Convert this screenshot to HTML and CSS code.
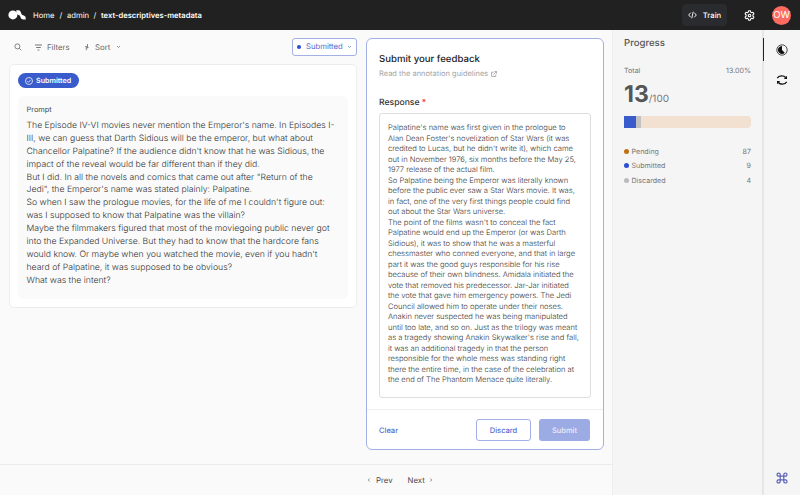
FILE: index.html
```html
<!DOCTYPE html>
<html lang="en">
<head>
<meta charset="utf-8">
<title>text-descriptives-metadata</title>
<link rel="stylesheet" href="styles.css">
</head>
<body>
<header class="topbar">
  <svg class="logo" width="18" height="10" viewBox="0 0 18 10" fill="#fff"><circle cx="4.900" cy="4.900" r="4.500"/><path d="M8.300.3h1.900c1.300 0 2.100.6 2.600 1.900l.5 1.300c.4 1 .9 1.500 1.900 1.800 1.500.4 2.500 1.200 2.500 2.700v1.500h-2.200c-1.600 0-2.500-.7-2.900-2l-.3-.9c-.3-.8-.8-1.300-1.700-1.600C9 4.500 8.300 3.700 8.300 2.300z"/></svg>
  <nav class="crumbs"><span class="c-home">Home</span><span class="sep">/</span><span class="c-admin">admin</span><span class="sep">/</span><b>text-descriptives-metadata</b></nav>
  <button class="train"><svg width="9" height="8" viewBox="0 0 9 8" fill="none" stroke="#fff" stroke-width=".9"><path d="M2.700 1.700.7 4l2 2.300M6.300 1.700l2 2.300-2 2.300M5.200.7 3.800 7.300"/></svg><span>Train</span></button>
  <svg class="gear" width="11" height="11" viewBox="0 0 11 11" fill="none" stroke="#fff" stroke-width="1.100" stroke-linejoin="round"><path d="M4.600.8h1.800l.3 1.300 1 .6 1.300-.4.9 1.500-1 1v1.400l1 1-.9 1.500-1.300-.4-1 .6-.3 1.300H4.600l-.3-1.300-1-.6-1.300.4-.9-1.500 1-1V4.800l-1-1L2 2.300l1.300.4 1-.6z"/><circle cx="5.500" cy="5.500" r="1.300"/></svg>
  <div class="avatar">OW</div>
</header>
<div class="body">
  <main class="main">
    <div class="columns">
      <section class="left">
        <div class="toolbar">
          <svg width="8" height="8" viewBox="0 0 8 8" fill="none" stroke="#666" stroke-width=".8"><circle cx="3.400" cy="3.400" r="2.500"/><path d="m5.300 5.300 2 2"/></svg>
          <svg class="i-filter" width="7" height="7" viewBox="0 0 7 7" stroke="#666" stroke-width=".9"><path d="M0 1h7M1.200 3.500h4.600M2.600 6h1.800"/></svg><span class="t-filter">Filters</span>
          <svg class="i-sort" width="6" height="8" viewBox="0 0 6 8" fill="none" stroke="#666" stroke-width=".8"><path d="M2.300 7.200V3L1.300 4M3.500 1v4.200l1-1"/></svg><span class="t-sort">Sort</span>
          <svg class="i-chev" width="5" height="4" viewBox="0 0 5 4" fill="none" stroke="#777" stroke-width=".8"><path d="m1 1 1.500 1.500L4 1"/></svg>
          <div class="status"><i></i><span>Submitted</span><svg width="5" height="4" viewBox="0 0 5 4" fill="none" stroke="#6b7fd6" stroke-width=".8"><path d="m1 1 1.500 1.500L4 1"/></svg></div>
        </div>
        <article class="record">
          <div class="badge"><svg width="8" height="8" viewBox="0 0 8 8" fill="none" stroke="#fff" stroke-width=".75"><circle cx="4" cy="4" r="3.500"/><path d="m2.300 4.100 1.200 1.200 2.200-2.400"/></svg><span>Submitted</span></div>
          <div class="field">
            <h3>Prompt</h3>
            <p>The Episode IV-VI movies never mention the Emperor's name. In Episodes I-
III, we can guess that Darth Sidious will be the emperor, but what about
Chancellor Palpatine? If the audience didn't know that he was Sidious, the
impact of the reveal would be far different than if they did.
But I did. In all the novels and comics that came out after "Return of the
Jedi", the Emperor's name was stated plainly: Palpatine.
So when I saw the prologue movies, for the life of me I couldn't figure out:
was I supposed to know that Palpatine was the villain?
Maybe the filmmakers figured that most of the moviegoing public never got
into the Expanded Universe. But they had to know that the hardcore fans
would know. Or maybe when you watched the movie, even if you hadn't
heard of Palpatine, it was supposed to be obvious?
What was the intent?</p>
          </div>
        </article>
      </section>
      <section class="form">
        <div class="questions">
          <h2>Submit your feedback</h2>
          <div class="guide"><span>Read the annotation guidelines</span><svg width="6" height="6" viewBox="0 0 6 6" fill="none" stroke="#999" stroke-width=".8"><path d="M2.500 1.200H.6v4.200h4.200V3.500M3.500.5h2v2M5.400.6 2.600 3.400"/></svg></div>
          <h4>Response <em>*</em></h4>
          <div class="answer">Palpatine's name was first given in the prologue to
Alan Dean Foster's novelization of Star Wars (it was
credited to Lucas, but he didn't write it), which came
out in November 1976, six months before the May 25,
1977 release of the actual film.
So Palpatine being the Emperor was literally known
before the public ever saw a Star Wars movie. It was,
in fact, one of the very first things people could find
out about the Star Wars universe.
The point of the films wasn't to conceal the fact
Palpatine would end up the Emperor (or was Darth
Sidious), it was to show that he was a masterful
chessmaster who conned everyone, and that in large
part it was the good guys responsible for his rise
because of their own blindness. Amidala initiated the
vote that removed his predecessor. Jar-Jar initiated
the vote that gave him emergency powers. The Jedi
Council allowed him to operate under their noses.
Anakin never suspected he was being manipulated
until too late, and so on. Just as the trilogy was meant
as a tragedy showing Anakin Skywalker's rise and fall,
it was an additional tragedy in that the person
responsible for the whole mess was standing right
there the entire time, in the case of the celebration at
the end of The Phantom Menace quite literally.</div>
        </div>
        <div class="actions"><button class="clear">Clear</button><button class="discard">Discard</button><button class="submit">Submit</button></div>
      </section>
    </div>
    <footer class="pager">
      <svg width="4" height="6" viewBox="0 0 4 6" fill="none" stroke="#777" stroke-width=".8"><path d="M2.700 1.500 1.200 3l1.500 1.500"/></svg><span class="prev">Prev</span><span class="next">Next</span><svg width="4" height="6" viewBox="0 0 4 6" fill="none" stroke="#777" stroke-width=".8"><path d="M1.300 1.500 2.800 3 1.300 4.500"/></svg>
    </footer>
  </main>
  <aside class="progress">
    <h2>Progress</h2>
    <div class="row total"><span>Total</span><span>13.00%</span></div>
    <div class="count"><b>13</b><span>/100</span></div>
    <div class="bar"><i class="done"></i><i class="gone"></i></div>
    <div class="row"><i class="dot pending"></i><span>Pending</span><span class="num">87</span></div>
    <div class="row"><i class="dot submitted"></i><span>Submitted</span><span class="num">9</span></div>
    <div class="row"><i class="dot discarded"></i><span>Discarded</span><span class="num">4</span></div>
  </aside>
  <div class="rail">
    <div class="tab"><svg width="12" height="12" viewBox="0 0 12 12"><circle cx="6" cy="6" r="5.200" fill="none" stroke="#222" stroke-width=".8"/><path d="M6 2v4l2.800 2.800A4 4 0 1 1 6 2z" fill="#111"/></svg></div>
    <svg class="refresh" width="12" height="12" viewBox="0 0 12 12" fill="none" stroke="#111" stroke-width="1.300"><path d="M1.300 4.100C3 1.300 7.500 1.100 9.700 3.500M10.700 7.900C9 10.700 4.500 10.900 2.300 8.500"/><path d="M11 1.700v3.200H7.800zM1 10.300V7.100h3.200z" fill="#111" stroke="none"/></svg>
    <svg class="cmd" width="12" height="12" viewBox="0 0 12 12" fill="none" stroke="#5a62b8" stroke-width="1.200"><path d="M4.200 4.200h3.600v3.600H4.200zM4.200 4.200H2.600a1.600 1.600 0 1 1 1.600-1.600zM7.800 4.200V2.600a1.600 1.600 0 1 1 1.600 1.600zM7.800 7.800h1.600a1.600 1.600 0 1 1-1.600 1.600zM4.200 7.800v1.600a1.600 1.600 0 1 1-1.600-1.600z"/></svg>
  </div>
</div>
</body>
</html>
```
FILE: styles.css
```css
* { box-sizing: border-box; }
body { margin: 0; width: 800px; height: 495px; overflow: hidden; font-family: Inter, "Liberation Sans", sans-serif; font-size: 8px; color: #4a4a4a; background: #fafafa; display: flex; flex-direction: column; text-rendering: geometricPrecision; }
h2, h3, h4, p { margin: 0; font-weight: 400; }
button { font: inherit; margin: 0; padding: 0; border: 0; background: none; text-rendering: inherit; }
svg { display: block; flex: none; }
span { white-space: nowrap; }

.topbar { height: 30px; flex: none; background: #212121; color: #fff; display: flex; align-items: center; padding: 0 9px 0 8px; }
.logo { margin-right: 7px; }
.crumbs { display: flex; font-size: 7.700px; line-height: 12px; padding-top: 1px; }
.crumbs .c-home { width: 22px; }
.crumbs .c-admin { width: 22px; }
.crumbs .sep { width: 12px; text-align: center; }
.crumbs b { font-weight: 600; font-size: 7.600px; }
.train { margin-left: auto; width: 45px; height: 22px; border-radius: 4px; background: #292b2e; color: #fff; display: flex; align-items: center; justify-content: center; gap: 6px; font-size: 7.700px; font-weight: 500; }
.gear { margin: 0 17px 0 17px; }
.avatar { width: 19px; height: 19px; border-radius: 50%; background: #fc6a60; font-size: 9.500px; line-height: 19px; text-align: center; }

.body { flex: 1; display: flex; min-height: 0; }
.main { width: 612px; display: flex; flex-direction: column; }
.columns { flex: 1; display: flex; gap: 9px; padding: 8px 8px 14px 9px; }
.left { width: 348px; }
.toolbar { display: flex; align-items: center; height: 18px; margin-bottom: 8px; padding-left: 5px; font-size: 7.800px; line-height: 10px; color: #666; }
.i-filter { margin: 0 5px 0 13px; }
.t-filter { width: 37px; }
.i-sort { margin: 0 5px 0 0; }
.t-sort { width: 21px; }
.status { margin-left: auto; width: 65px; height: 18px; border: 1px solid #a3b0e6; border-radius: 3px; background: #fff; color: #5468cc; display: flex; align-items: center; padding: 0 4px; font-size: 7.700px; }
.status i { width: 4px; height: 4px; border-radius: 50%; background: #2a4fd0; margin-right: 5px; }
.status svg { margin-left: auto; }
.record { height: 244px; border: 1px solid #ededed; border-radius: 5px; background: #fff; padding: 8px; }
.badge { width: 61px; height: 15px; border-radius: 8px; background: #3a5bcb; color: #fff; display: flex; align-items: center; gap: 3px; padding-left: 7px; font-size: 7.150px; font-weight: 600; }
.field { margin-top: 8px; height: 203px; border-radius: 5px; background: #fafafa; padding: 8px 8.500px; }
.field h3 { font-size: 7.400px; line-height: 12px; margin-bottom: 4px; }
.field p { font-size: 8.700px; font-weight: 300; line-height: 12.870px; white-space: pre; color: #333; }

.form { width: 238px; border: 1px solid #a3b0e6; border-radius: 6px; background: #fff; display: flex; flex-direction: column; }
.questions { flex: 1; padding: 14px 12px 0; }
.form h2 { font-size: 9.600px; line-height: 14px; color: #222; font-weight: 500; }
.guide { display: flex; align-items: center; gap: 3px; font-size: 7.500px; line-height: 14px; color: #a5a5a5; }
.form h4 { font-size: 8.600px; line-height: 14px; margin-top: 15px; color: #333; font-weight: 500; }
.form em { color: #f33; font-style: normal; }
.answer { margin-top: 3px; width: 212px; height: 285px; border: 1px solid #ddd; border-radius: 3px; padding: 9px 8px 0; font-size: 7.600px; font-weight: 300; line-height: 10.500px; white-space: pre; color: #333; }
.actions { height: 40px; border-top: 1px solid #eee; display: flex; align-items: center; padding: 0 13px 0 12px; font-size: 7.500px; font-weight: 500; color: #5468cc; }
.actions button { color: inherit; padding-top: 1px; }
.actions .discard { margin-left: auto; width: 55px; height: 22px; border: 1px solid #a3b0e6; border-radius: 3px; }
.actions .submit { margin-left: 8px; width: 51px; height: 22px; border-radius: 3px; background: #9dabe4; color: #e9edfb; }

.pager { height: 31px; flex: none; border-top: 1px solid #ebebeb; display: flex; align-items: center; padding-left: 367px; font-size: 7.800px; }
.prev { margin: 0 15px 0 5px; }
.next { margin-right: 4px; }

.progress { width: 152px; background: #f5f5f5; border-left: 1px solid #eee; border-right: 2px solid #e6e6e6; padding: 7px 11px 0 11px; color: #777; font-size: 7.100px; }
.progress h2 { font-size: 9.600px; line-height: 14px; color: #555; font-weight: 500; }
.row { display: flex; align-items: center; height: 14.700px; }
.total { justify-content: space-between; margin-top: 12.500px; }
.count { display: flex; align-items: baseline; height: 24px; margin-top: 3.500px; color: #777; font-size: 10px; line-height: 24px; }
.count b { font-size: 23px; font-weight: 700; color: #555; }
.bar { display: flex; height: 12px; margin: 10px 0 16px; border-radius: 0 4px 4px 0; background: #f2e0d0; overflow: hidden; width: 127px; }
.bar .done { width: 12px; background: #3a5bcb; }
.bar .gone { width: 5px; background: #c2c2c2; }
.dot { width: 5px; height: 5px; border-radius: 50%; margin-right: 2.500px; }
.pending { background: #c07012; }
.submitted { background: #2a4fd0; }
.discarded { background: #bbb; }
.num { margin-left: auto; }

.rail { flex: 1; background: #f5f5f5; display: flex; flex-direction: column; align-items: center; padding: 8px 0 11px; }
.tab { align-self: stretch; height: 23px; margin-left: -1px; border-left: 1px solid #222; display: flex; align-items: center; justify-content: center; }
.refresh { margin-top: 13px; }
.cmd { margin-top: auto; }
```
